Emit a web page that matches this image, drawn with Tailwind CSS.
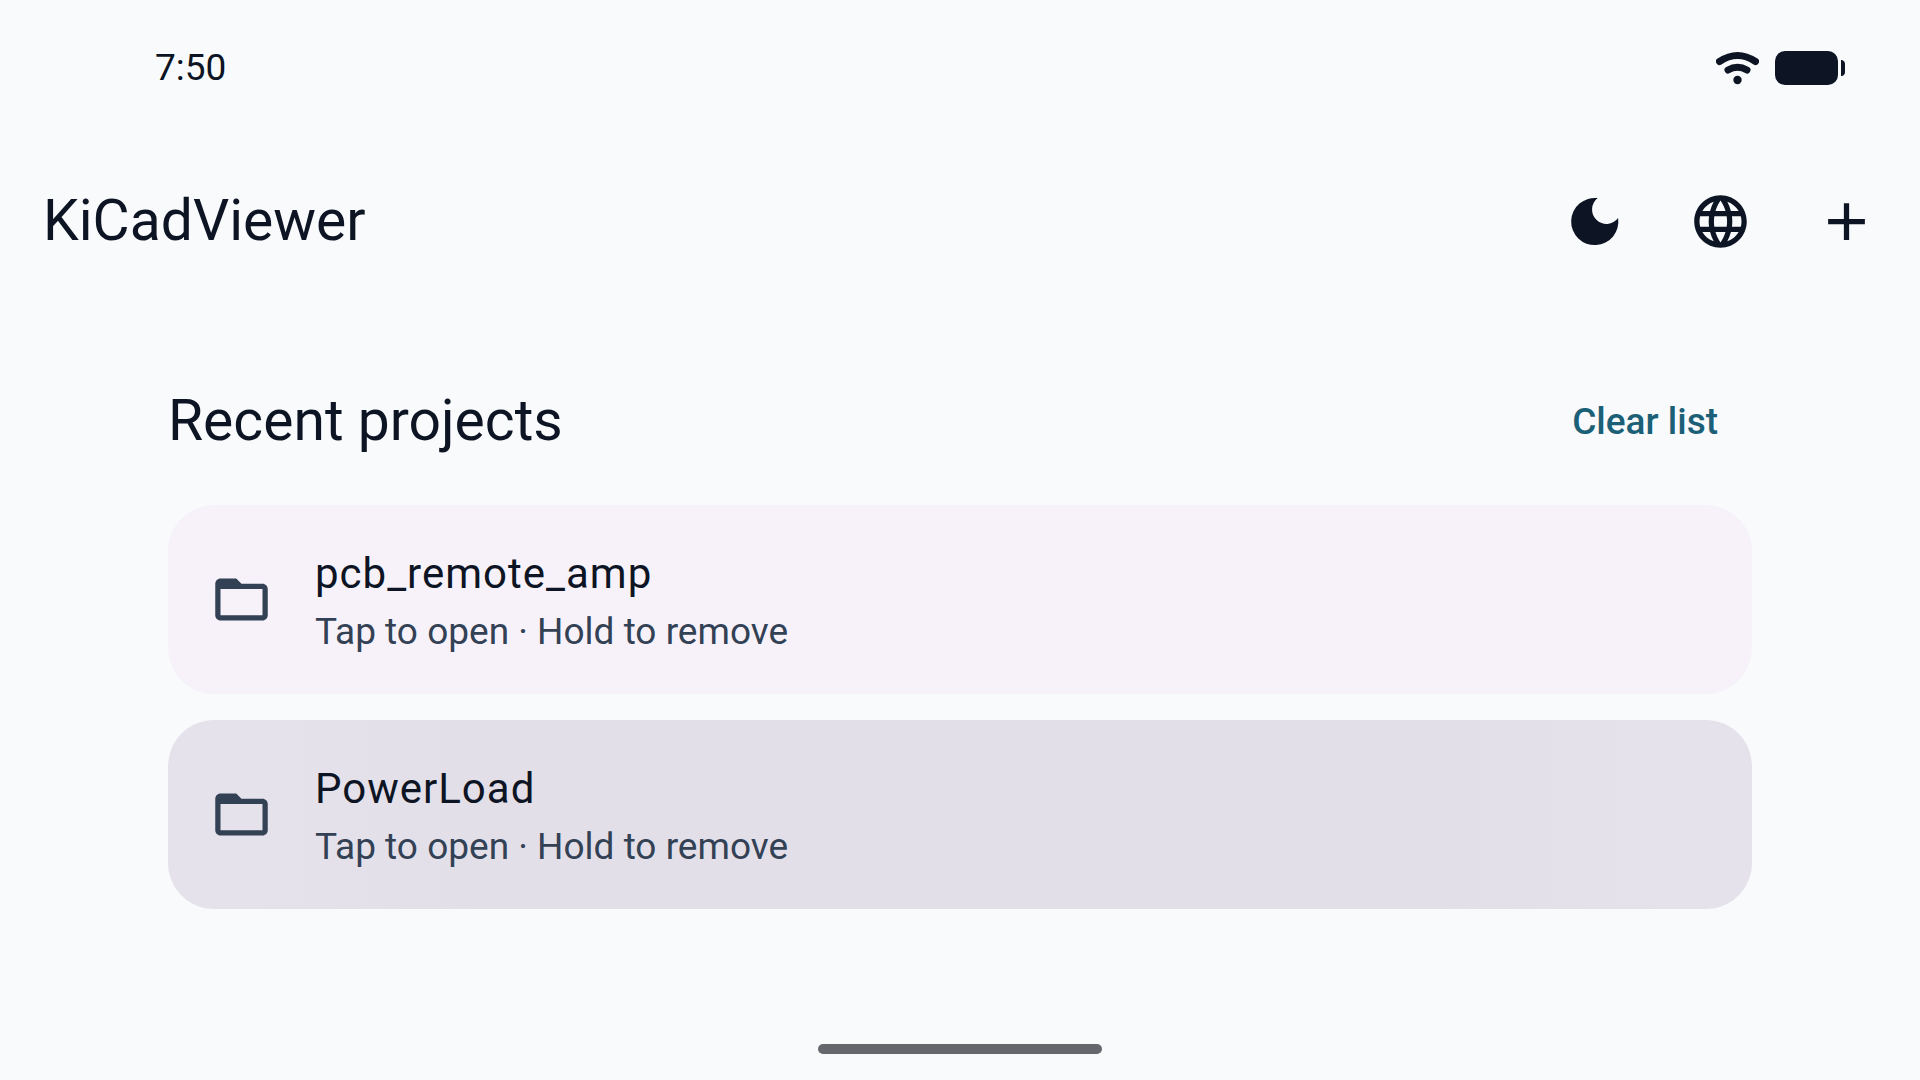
<!DOCTYPE html>
<html lang="en">
<head>
<meta charset="utf-8">
<meta name="viewport" content="width=device-width, initial-scale=1">
<title>KiCadViewer</title>
<script src="https://cdn.jsdelivr.net/npm/@tailwindcss/browser@4"></script>
</head>
<body class="flex min-h-screen flex-col bg-[#f9fafc] font-[Roboto,sans-serif] text-[#0d1423]">
  <!-- Status bar -->
  <div class="flex h-[136px] items-center justify-between pr-[75px] pl-[155px]">
    <time class="text-[37px] leading-[40px]">7:50</time>
    <div class="flex items-center gap-4">
      <svg class="h-[34px] w-[43px]" viewBox="0 0 43 34" fill="none" stroke="currentColor" stroke-width="7" stroke-linecap="round" role="img" aria-label="Wi-Fi">
        <path d="M3.5 10.5Q21.5-1.5 39.5 10.5"/>
        <path d="M12 19Q21.5 13.500 31 19"/>
        <circle cx="21.500" cy="29" r="4.200" fill="currentColor" stroke="none"/>
      </svg>
      <svg class="h-[34px] w-[70px]" viewBox="0 0 70 34" fill="currentColor" role="img" aria-label="Battery full">
        <rect width="63" height="34" rx="10"/>
        <path d="M66 9h1q3 1 3 4v8q0 3-3 4h-1z"/>
      </svg>
    </div>
  </div>

  <!-- App bar -->
  <header class="flex h-[170px] items-center justify-between pr-[11px] pl-[43px]">
    <h1 class="text-[57px] leading-[74px]">KiCadViewer</h1>
    <div class="flex">
      <button type="button" aria-label="Dark theme" class="flex size-[126px] items-center justify-center">
        <svg class="size-[63px]" viewBox="0 0 63 63" fill="currentColor"><path d="M34.700 8.100A23.600 23.600 0 1 0 55.100 28A14.400 14.400 0 1 1 34.700 8.100z"/></svg>
      </button>
      <button type="button" aria-label="Language" class="flex size-[126px] items-center justify-center">
        <svg class="size-[63px]" viewBox="0 0 24 24" fill="currentColor"><path d="M11.990 2C6.470 2 2 6.480 2 12s4.470 10 9.990 10C17.520 22 22 17.520 22 12S17.520 2 11.990 2zm6.930 6h-2.950c-.32-1.250-.78-2.450-1.380-3.560 1.840.63 3.370 1.910 4.330 3.560zM12 4.040c.83 1.200 1.480 2.530 1.910 3.960h-3.820c.43-1.430 1.080-2.760 1.910-3.960zM4.260 14C4.100 13.360 4 12.690 4 12s.1-1.360.26-2h3.380c-.08.66-.14 1.320-.14 2s.06 1.340.14 2H4.260zm.82 2h2.950c.32 1.250.78 2.450 1.380 3.560-1.840-.63-3.370-1.900-4.330-3.560zm2.950-8H5.080c.96-1.660 2.490-2.930 4.330-3.560C8.810 5.550 8.350 6.750 8.030 8zM12 19.960c-.83-1.200-1.480-2.530-1.910-3.960h3.820c-.43 1.430-1.080 2.760-1.910 3.960zM14.340 14H9.660c-.09-.66-.16-1.320-.16-2s.07-1.350.16-2h4.680c.09.65.16 1.320.16 2s-.07 1.340-.16 2zm.25 5.560c.6-1.110 1.060-2.310 1.380-3.560h2.950c-.96 1.650-2.490 2.930-4.330 3.560zM16.360 14c.08-.66.14-1.320.14-2s-.06-1.340-.14-2h3.380c.16.64.26 1.310.26 2s-.1 1.360-.26 2h-3.380z"/></svg>
      </button>
      <button type="button" aria-label="Add project" class="flex size-[126px] items-center justify-center">
        <svg class="size-[63px]" viewBox="0 0 24 24" fill="currentColor"><path d="M19 13h-6v6h-2v-6H5v-2h6V5h2v6h6v2z"/></svg>
      </button>
    </div>
  </header>

  <!-- Recent projects -->
  <main class="flex grow flex-col px-[168px] pt-[52px]">
    <div class="mb-[21px] flex h-[126px] items-center justify-between">
      <h2 class="text-[57px] leading-[74px]">Recent projects</h2>
      <button type="button" class="px-[34px] py-6 text-[37px] leading-[53px] font-medium text-[#1b6077]">Clear list</button>
    </div>
    <ul class="flex flex-col gap-[26px]">
      <li>
        <button type="button" class="flex h-[189px] w-full items-center gap-[42px] rounded-[46px] bg-[#f7f2fa] px-[42px] text-left">
          <svg class="size-[63px] shrink-0 text-[#334155]" viewBox="0 0 24 24" fill="currentColor" aria-hidden="true"><path d="M20 6h-8l-2-2H4c-1.100 0-1.990.9-1.990 2L2 18c0 1.100.9 2 2 2h16c1.100 0 2-.9 2-2V8c0-1.100-.9-2-2-2zm0 12H4V8h16v10z"/></svg>
          <span class="flex flex-col">
            <span class="text-[42px] leading-[63px] tracking-[1px]">pcb_remote_amp</span>
            <span class="text-[37px] leading-[53px] text-[#334155]">Tap to open · Hold to remove</span>
          </span>
        </button>
      </li>
      <li>
        <button type="button" class="flex h-[189px] w-full items-center gap-[42px] rounded-[46px] bg-[linear-gradient(90deg,#e6e2ec_5%,#e3dfe9_20%,#e3dfe9_80%,#e6e2ec_95%)] px-[42px] text-left">
          <svg class="size-[63px] shrink-0 text-[#334155]" viewBox="0 0 24 24" fill="currentColor" aria-hidden="true"><path d="M20 6h-8l-2-2H4c-1.100 0-1.990.9-1.990 2L2 18c0 1.100.9 2 2 2h16c1.100 0 2-.9 2-2V8c0-1.100-.9-2-2-2zm0 12H4V8h16v10z"/></svg>
          <span class="flex flex-col">
            <span class="text-[42px] leading-[63px] tracking-[1px]">PowerLoad</span>
            <span class="text-[37px] leading-[53px] text-[#334155]">Tap to open · Hold to remove</span>
          </span>
        </button>
      </li>
    </ul>
  </main>

  <!-- Gesture bar -->
  <footer class="flex justify-center pb-[26px]">
    <div class="h-[10px] w-[284px] rounded-full bg-[#66676d]"></div>
  </footer>
</body>
</html>
